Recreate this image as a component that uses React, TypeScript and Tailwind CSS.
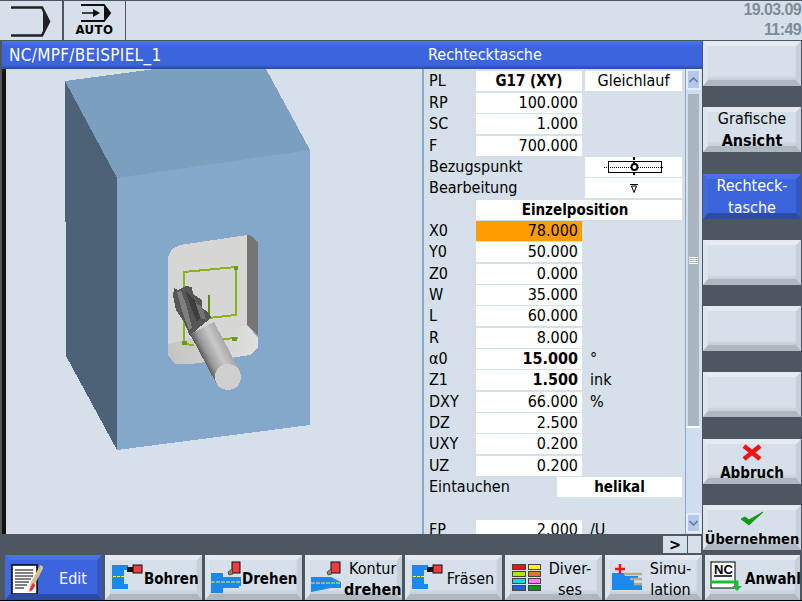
import type { ReactNode } from "react";

const font = "font-['DejaVu_Sans_Condensed','DejaVu_Sans',sans-serif] [font-stretch:condensed]";

function Softkey({ children, active, className }: { children?: ReactNode; active?: boolean; className?: string }) {
  const skin = active
    ? "bg-[#3c64dc] text-white border-t-[#4a72e6] border-l-[#4069de] border-r-[#3358c4] border-b-[#2c4aa8]"
    : "bg-[#d6e0ea] text-black border-t-[#e4eaf0] border-l-[#dde5ec] border-r-[#c6d0d9] border-b-[#aeb8c1] shadow-[inset_0_-3px_2px_#c8d2db]";
  return (
    <div className={`box-border border-[5px] border-b-[6px] h-[45px] flex items-center ${skin} ${className ?? ""}`}>
      {children}
    </div>
  );
}

function Row({ label, value, unit, orange, hl }: { label?: string; value?: string; unit?: string; orange?: boolean; hl?: boolean }) {
  return (
    <div className="flex h-5 shrink-0 items-center">
      <div className="w-[52px] pl-[5px] shrink-0">{label}</div>
      <div className={`w-[106px] h-5 shrink-0 text-right pr-[4px] ${orange ? "bg-[#ff9c00]" : "bg-white"} ${hl ? "font-bold" : ""}`}>{value}</div>
      {unit && <div className="pl-[8px]">{unit}</div>}
    </div>
  );
}

function DrillIcon() {
  return (
    <svg width="32" height="26" viewBox="0 0 32 26" className="shrink-0 ml-[2px]">
      <path d="M0 1h16v5h-4v14h4v5H0z" fill="#1a88ec" />
      <path d="M1 12.500h11" stroke="#f4f04a" strokeDasharray="3 1" />
      <rect x="15" y="3" width="6" height="5" fill="#111" />
      <rect x="21" y="1" width="9" height="8" fill="#f03c3c" stroke="#111" />
    </svg>
  );
}

export default function App() {
  return (
    <div className={`relative w-[802px] h-[602px] overflow-hidden bg-[#4d5761] flex flex-col text-[16px] leading-5 text-black ${font}`}>
      {/* top status bar */}
      <div className="h-[41px] shrink-0 flex bg-[#d6e0ea] border-t border-b border-[#4d5761] pl-[2px]">
        <div className="w-[62px] border-r-2 border-[#4d5761] flex items-center justify-center">
          <svg width="44" height="34" viewBox="0 0 44 34">
            <path d="M1 3.500h31l7 14-7 14H1" fill="none" stroke="#222" strokeWidth="2.500" />
            <path d="M33 4l6.500 13.500L33 31z" fill="#222" />
          </svg>
        </div>
        <div className="w-[62px] border-r-[1.5px] border-[#4d5761] flex flex-col items-center pt-[2px]">
          <svg width="34" height="20" viewBox="0 0 34 20">
            <path d="M3 2h23l6 8-6 8H3" fill="none" stroke="#111" strokeWidth="2" />
            <path d="M26 2l6 8-6 8z" fill="#111" />
            <path d="M4 10h14" stroke="#111" strokeWidth="1.500" />
            <path d="M15 6l7 4-7 4z" fill="#111" />
          </svg>
          <div className="text-[13px] leading-[14px] font-bold tracking-[0.5px]">AUTO</div>
        </div>
        <div className="flex-1 flex flex-col items-end pr-[1px] -mt-[1px] text-[#7f8b96] font-bold text-[16px] leading-[20px] font-['Liberation_Sans',sans-serif] tracking-[-0.6px]">
          <div>19.03.09</div>
          <div>11:49</div>
        </div>
      </div>

      {/* main area */}
      <div className="h-[514px] shrink-0 flex pl-[2px]">
        <div className="w-[700px] shrink-0 flex flex-col">
          <div className="h-[28px] shrink-0 flex items-center text-white bg-[linear-gradient(#4a76ee,#3c64dc_20%,#3c64dc_85%,#2a4aa6)]">
            <div className="w-[422px] pl-[7px] text-[17px] tracking-[0.3px]">NC/MPF/BEISPIEL_1</div>
            <div className="pl-[4px]">Rechtecktasche</div>
          </div>

          <div className="h-[465px] shrink-0 flex">
            {/* 3D view */}
            <div className="w-[422px] shrink-0 border-l-4 border-[#16110c] bg-[#d6e0ea] border-r-2 border-r-[#88a8cc] box-border">
              <svg width="416" height="465" viewBox="6 69 416 465" shapeRendering="crispEdges">
                <defs>
                  <linearGradient id="shaft" gradientUnits="userSpaceOnUse" x1="190" y1="334" x2="214" y2="322">
                    <stop offset="0" stopColor="#555" />
                    <stop offset="0.25" stopColor="#9a9a9a" />
                    <stop offset="0.65" stopColor="#c8c8c8" />
                    <stop offset="1" stopColor="#aaa" />
                  </linearGradient>
                  <linearGradient id="wallb" x1="0" y1="0" x2="1" y2="0">
                    <stop offset="0" stopColor="#c4c4c2" />
                    <stop offset="0.5" stopColor="#d2d2d0" />
                    <stop offset="1" stopColor="#e0e0de" />
                  </linearGradient>
                </defs>
                <path d="M65 81L155 69H266L310 150L117 178z" fill="#7c9ebf" />
                <path d="M65 81L117 178V450L66 356z" fill="#4d6276" />
                <path d="M117 178L310 150V425L117 450z" fill="#84a7cb" />
                {/* pocket */}
                <path d="M168 257L172 249L180 245L247 235V330L168 344z" fill="#d6d6d4" />
                <path d="M247 235L252 236L258 243V335L247 325z" fill="#757575" />
                <path d="M168 344L247 325L258 338V347L250 355L192 364H175L168 355z" fill="url(#wallb)" />
                {/* contour */}
                <path d="M184 343V272L236 267V315L208 318" fill="none" stroke="#8ab31e" strokeWidth="2" />
                <path d="M209 295V316" stroke="#5e8c10" strokeWidth="2" />
                <path d="M184 344L194 345M223 339L238 338" stroke="#8ab31e" strokeWidth="2" />
                <rect x="182" y="341" width="5" height="4" fill="#6d9a12" />
                <rect x="232" y="337" width="5" height="4" fill="#6d9a12" />
                <rect x="234" y="266" width="4" height="4" fill="#6d9a12" />
                {/* tool */}
                <path d="M174 288L178 290L186 286L192 287L193 294L202 300L202 308L208 312L211 317L206 322L196 330L190 336L184 322L176 310L173 296z" fill="#565656" />
                <path d="M177 292L183 314L189 330L192 328L186 304L181 291z" fill="#808080" />
                <path d="M186 292L192 310L197 322L200 318L195 300z" fill="#3e3e3e" />
                <path d="M195 302L201 318L206 320L203 308z" fill="#737373" />
                <path d="M190 334L214 322L240 371L216 383z" fill="url(#shaft)" />
                <circle cx="228" cy="377" r="13" fill="#d0d0d0" />
              </svg>
            </div>

            {/* parameter form */}
            <div className="w-[261px] h-[465px] shrink-0 overflow-hidden bg-[#d6e0ea] flex flex-col gap-[1.33px] pt-[2px]">
              <div className="flex h-5 shrink-0">
                <div className="w-[52px] pl-[5px]">PL</div>
                <div className="w-[106px] bg-white text-center font-bold text-[15px]">G17 (XY)</div>
                <div className="w-[97px] ml-[3px] bg-white text-center">Gleichlauf</div>
              </div>
              <div className="h-[0.67px] shrink-0 -mt-[1.33px]" />
              <Row label="RP" value="100.000" />
              <Row label="SC" value="1.000" />
              <Row label="F" value="700.000" />
              <div className="flex h-5 shrink-0">
                <div className="w-[161px] pl-[5px]">Bezugspunkt</div>
                <div className="w-[97px] bg-white flex items-center justify-center">
                  <svg width="60" height="20" viewBox="0 0 60 20" shapeRendering="crispEdges">
                    <rect x="4.500" y="4.500" width="53" height="11" fill="none" stroke="#000" />
                    <path d="M0 10h60" stroke="#000" strokeDasharray="1 1" />
                    <path d="M30 0v20" stroke="#000" strokeWidth="2" strokeDasharray="3 2" />
                    <circle cx="30.500" cy="10" r="3" fill="#fff" stroke="#000" strokeWidth="2" shapeRendering="auto" />
                  </svg>
                </div>
              </div>
              <div className="flex h-5 shrink-0">
                <div className="w-[161px] pl-[5px]">Bearbeitung</div>
                <div className="w-[97px] bg-white flex items-center justify-center">
                  <svg width="8" height="11" viewBox="0 0 8 11">
                    <path d="M0 1.500h8M1.500 3h5L4 9.500z" fill="none" stroke="#000" />
                  </svg>
                </div>
              </div>
              <div className="flex h-5 shrink-0">
                <div className="w-[52px]" />
                <div className="w-[206px] bg-white text-center font-bold text-[15px] pr-[8px]">Einzelposition</div>
              </div>
              <Row label="X0" value="78.000" orange />
              <Row label="Y0" value="50.000" />
              <Row label="Z0" value="0.000" />
              <Row label="W" value="35.000" />
              <Row label="L" value="60.000" />
              <Row label="R" value="8.000" />
              <Row label="α0" value="15.000" unit="°" hl />
              <Row label="Z1" value="1.500" unit="ink" hl />
              <Row label="DXY" value="66.000" unit="%" />
              <Row label="DZ" value="2.500" />
              <Row label="UXY" value="0.200" />
              <Row label="UZ" value="0.200" />
              <div className="flex h-5 shrink-0">
                <div className="w-[133px] pl-[5px]">Eintauchen</div>
                <div className="w-[125px] bg-white text-center font-bold text-[15px]">helikal</div>
              </div>
              <div className="h-5 shrink-0" />
              <Row label="FP" value="2.000" unit="/U" />
            </div>

            {/* scrollbar */}
            <div className="w-[17px] h-[465px] shrink-0 flex flex-col border-l border-[#8aa5c8] bg-[#cfdcf2] pr-[1px]">
              <div className="h-[21px] shrink-0 border-2 border-[#e6ecf4] bg-[#b4c8ee] flex items-center justify-center">
                <svg width="9" height="6" viewBox="0 0 9 6"><path d="M0.500 5L4.500 1l4 4" fill="none" stroke="#6a7c94" strokeWidth="1.600" /></svg>
              </div>
              <div className="h-[423px] shrink-0 pt-[3px]">
                <div className="h-[335px] bg-[#a9b5c0] border-x-2 border-t border-[#d6e0ea] border-b-2 border-b-white flex flex-col items-center justify-center gap-[1px]">
                  <div className="w-[9px] h-px bg-white" />
                  <div className="w-[9px] h-px bg-white" />
                  <div className="w-[9px] h-px bg-white" />
                  <div className="w-[9px] h-px bg-white" />
                </div>
              </div>
              <div className="h-[20px] shrink-0 border-2 border-[#e6ecf4] bg-[#b4c8ee] flex items-center justify-center">
                <svg width="9" height="6" viewBox="0 0 9 6"><path d="M0.500 1l4 4 4-4" fill="none" stroke="#6a7c94" strokeWidth="1.600" /></svg>
              </div>
            </div>
          </div>

          <div className="h-[21px] shrink-0 flex justify-end items-center pr-[1px]">
            <div className="w-[24px] h-[17px] bg-[#d6e0ea] flex items-center justify-center font-bold leading-none">&gt;</div>
            <div className="w-[13px] h-[17px] ml-[1px] bg-[#d6e0ea]" />
          </div>
        </div>

        {/* right softkeys */}
        <div className="w-[98px] ml-[1px] shrink-0 flex flex-col gap-[21.3px]">
          <Softkey />
          <Softkey className="justify-center text-center">
            <div className="leading-[22px] pt-[2px]">Grafische<br /><b>Ansicht</b></div>
          </Softkey>
          <Softkey active className="justify-center text-center">
            <div className="leading-[22px] pt-[2px]">Rechteck-<br />tasche</div>
          </Softkey>
          <Softkey />
          <Softkey />
          <Softkey />
          <Softkey className="flex-col justify-start">
            <svg width="20" height="17" viewBox="0 0 20 17" className="shrink-0"><path d="M2 2l16 13M18 2L2 15" stroke="#f01414" strokeWidth="4.500" /></svg>
            <div className="font-bold leading-[18px] text-[15px] mt-[3px] shrink-0">Abbruch</div>
          </Softkey>
          <Softkey className="flex-col justify-start">
            <svg width="24" height="16" viewBox="0 0 24 16" className="shrink-0 mt-[1px]"><path d="M1 8l8 6L23 1 9 9 5 6z" fill="#129a12" stroke="#129a12" /></svg>
            <div className="font-bold leading-[18px] whitespace-nowrap text-[14.5px] mt-[3px] shrink-0">Übernehmen</div>
          </Softkey>
        </div>
      </div>

      {/* bottom softkeys */}
      <div className="h-[45px] shrink-0 flex gap-[3px] pl-[5px]">
        <Softkey active className="w-[97px] pl-[1px]">
          <svg width="32" height="34" viewBox="0 0 32 34" className="shrink-0">
            <rect x="1" y="5" width="25" height="29" fill="#fff" stroke="#000" strokeWidth="1.500" />
            <path d="M4 10h18M4 13h18M4 16h18M4 19h16M4 22h14M4 25h12M4 28h9" stroke="#000" />
            <path d="M31 6L20 27" stroke="#d8c08c" strokeWidth="4" />
            <path d="M22 23l-3.500 6 0 3 3-2 3-5z" fill="#e83030" />
          </svg>
          <div className="flex-1 text-center pl-[6px] pt-[3px]">Edit</div>
        </Softkey>
        <Softkey className="w-[97px]">
          <DrillIcon />
          <div className="flex-1 text-center font-bold text-[15px] pt-[3px]">Bohren</div>
        </Softkey>
        <Softkey className="w-[97px]">
          <svg width="32" height="32" viewBox="0 0 32 32" className="shrink-0">
            <path d="M1 12h12v4h18v9l-2 0v2H13v5H1z" fill="#1a88ec" />
            <path d="M1 21h30" stroke="#f4f04a" strokeDasharray="4 1" />
            <rect x="22" y="1" width="8" height="11" fill="#f03c3c" stroke="#111" />
            <path d="M22 8l-4 3 1 3 4-1z" fill="#a08050" stroke="#333" strokeWidth="0.700" />
          </svg>
          <div className="flex-1 text-center font-bold text-[15px] pt-[3px]">Drehen</div>
        </Softkey>
        <Softkey className="w-[97px]">
          <svg width="32" height="32" viewBox="0 0 32 32" className="shrink-0">
            <path d="M1 16h20l10 5v6H21L1 31z" fill="#1a88ec" />
            <path d="M1 22h30" stroke="#f4f04a" strokeDasharray="4 1" />
            <rect x="21" y="1" width="9" height="11" fill="#f03c3c" stroke="#111" />
            <path d="M21 8l-4 3 1 3 4-1z" fill="#a08050" stroke="#333" strokeWidth="0.700" />
          </svg>
          <div className="flex-1 text-center leading-[21px] pt-[3px] pl-[2px]">Kontur<br /><b>drehen</b></div>
        </Softkey>
        <Softkey className="w-[97px]">
          <DrillIcon />
          <div className="flex-1 text-center pt-[3px]">Fräsen</div>
        </Softkey>
        <Softkey className="w-[97px]">
          <div className="grid grid-cols-2 gap-x-[2px] gap-y-[1px] w-[29px] ml-[2px] shrink-0">
            <div className="h-[6px] bg-[#f01020] border border-[#444]" />
            <div className="h-[6px] bg-[#ffee20] border border-[#444]" />
            <div className="h-[6px] bg-[#b8e010] border border-[#444]" />
            <div className="h-[6px] bg-[#d87828] border border-[#444]" />
            <div className="h-[6px] bg-[#10d8e0] border border-[#444]" />
            <div className="h-[6px] bg-[#ff80e0] border border-[#444]" />
            <div className="h-[6px] bg-[#2060e0] border border-[#444]" />
            <div className="h-[6px] bg-[#109020] border border-[#444]" />
          </div>
          <div className="flex-1 text-center leading-[21px] pt-[3px] pl-[2px]">Diver-<br />ses</div>
        </Softkey>
        <Softkey className="w-[97px]">
          <svg width="32" height="26" viewBox="0 0 32 26" className="shrink-0">
            <path d="M2 9h13v3h13v3h-4v5h8v6H2z" fill="#1a88ec" />
            <path d="M14 10h18M20 15h12M24 20h8" stroke="#b8a888" strokeWidth="2.500" />
            <path d="M5 5h10M10 0v10" stroke="#f01414" strokeWidth="2.500" />
          </svg>
          <div className="flex-1 text-center leading-[21px] pt-[3px] pl-[2px]">Simu-<br />lation</div>
        </Softkey>
        <Softkey className="w-[95px]">
          <svg width="32" height="32" viewBox="0 0 32 32" className="shrink-0">
            <rect x="1" y="1" width="24" height="26" fill="#fff" stroke="#000" />
            <text x="4" y="13" fontSize="13" fontWeight="700" fontFamily="Liberation Sans, sans-serif">NC</text>
            <path d="M4 15h18" stroke="#000" strokeWidth="1.500" />
            <path d="M0 21h27v4" fill="none" stroke="#18c030" strokeWidth="3" />
            <path d="M22 25h10l-5 5z" fill="#18c030" />
          </svg>
          <div className="flex-1 text-center font-bold text-[15px] pt-[3px] pl-[3px]">Anwahl</div>
        </Softkey>
      </div>
      <div className="h-[1px] bg-black shrink-0" />
      <div className="h-[1px] bg-[#d6e0ea] shrink-0" />
    </div>
  );
}
